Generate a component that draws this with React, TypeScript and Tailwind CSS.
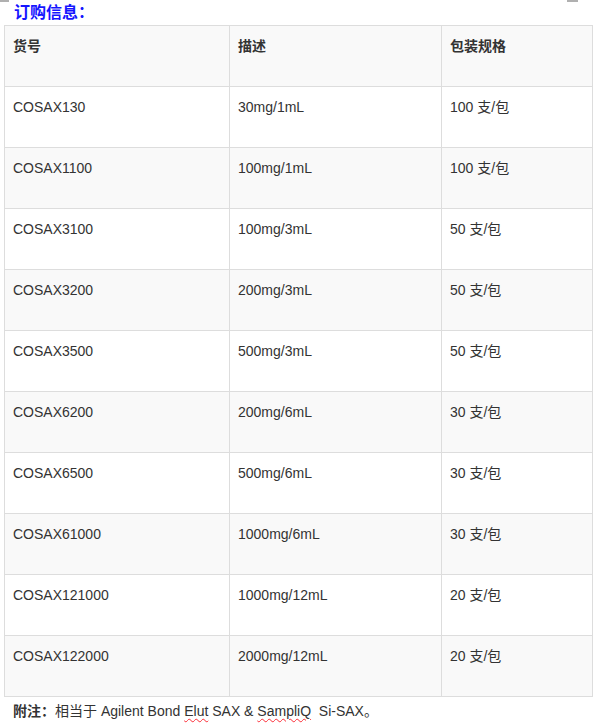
import React from 'react';

type Row = { code: string; desc: string; pack: string };

const rows: Row[] = [
  { code: 'COSAX130', desc: '30mg/1mL', pack: '100 支/包' },
  { code: 'COSAX1100', desc: '100mg/1mL', pack: '100 支/包' },
  { code: 'COSAX3100', desc: '100mg/3mL', pack: '50 支/包' },
  { code: 'COSAX3200', desc: '200mg/3mL', pack: '50 支/包' },
  { code: 'COSAX3500', desc: '500mg/3mL', pack: '50 支/包' },
  { code: 'COSAX6200', desc: '200mg/6mL', pack: '30 支/包' },
  { code: 'COSAX6500', desc: '500mg/6mL', pack: '30 支/包' },
  { code: 'COSAX61000', desc: '1000mg/6mL', pack: '30 支/包' },
  { code: 'COSAX121000', desc: '1000mg/12mL', pack: '20 支/包' },
  { code: 'COSAX122000', desc: '2000mg/12mL', pack: '20 支/包' },
];

const font = "font-['Liberation_Sans','Noto_Sans_CJK_SC',sans-serif]";
const cell = 'border border-[#dddddd] h-[61px] align-top pl-2 pt-[10px] text-[14px] leading-5';

const App: React.FC = () => {
  return (
    <div className={`w-[593px] h-[723px] bg-white text-[#333333] ${font} relative`}>
      <div className="absolute left-0 top-0 w-[9px] h-[2px] bg-[#b0b0b0]" />
      <div className="absolute left-[567px] top-0 w-[11px] h-[2px] bg-[#b0b0b0]" />
      <div className="h-[25px] pl-[14px] pt-[3px] text-[16px] leading-5 font-bold text-[#1515ff]">
        订购信息：
      </div>
      <table className="ml-1 w-[588px] border-collapse table-fixed">
        <colgroup>
          <col className="w-[225px]" />
          <col className="w-[212px]" />
          <col className="w-[151px]" />
        </colgroup>
        <thead>
          <tr className="bg-[#f9f9f9] text-left">
            <th className={`${cell} font-bold`}>货号</th>
            <th className={`${cell} font-bold`}>描述</th>
            <th className={`${cell} font-bold`}>包装规格</th>
          </tr>
        </thead>
        <tbody>
          {rows.map((r, i) => (
            <tr key={r.code} className={i % 2 === 1 ? 'bg-[#f9f9f9]' : 'bg-white'}>
              <td className={cell}>{r.code}</td>
              <td className={cell}>{r.desc}</td>
              <td className={cell}>{r.pack}</td>
            </tr>
          ))}
        </tbody>
      </table>
      <p className="pl-[13px] pt-[4px] text-[14px] leading-5">
        <span className="font-bold">附注：</span>相当于 Agilent Bond{' '}
        <span className="underline decoration-wavy decoration-red-500 decoration-1 underline-offset-2">Elut</span> SAX &amp;{' '}
        <span className="underline decoration-wavy decoration-red-500 decoration-1 underline-offset-2">SampliQ</span>
        &nbsp; Si-SAX。
      </p>
    </div>
  );
};

export default App;
